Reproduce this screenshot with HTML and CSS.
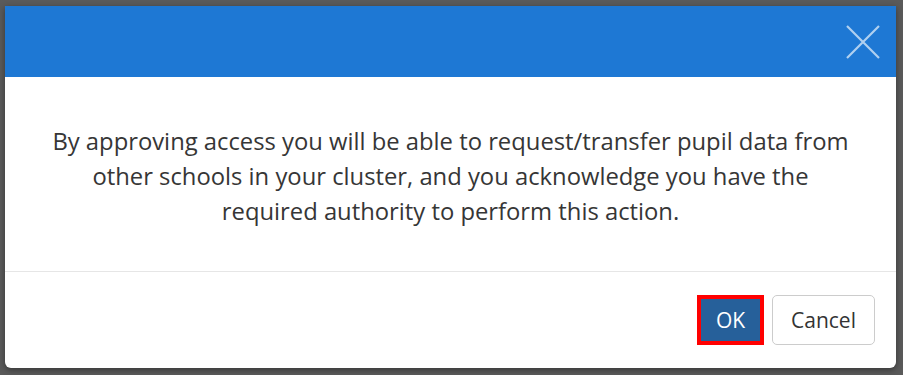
FILE: index.html
```html
<!DOCTYPE html>
<html>
<head>
<meta charset="utf-8">
<link rel="stylesheet" href="styles.css">
</head>
<body>
<div class="backdrop">
  <div class="modal">
    <div class="modal-header">
      <button class="close" aria-label="Close">
        <svg width="34" height="34" viewBox="0 0 34 34"><path d="M1 1 L33 33 M33 1 L1 33" stroke="#ffffff" stroke-opacity="0.65" stroke-width="2.2" fill="none"/></svg>
      </button>
    </div>
    <div class="modal-body">
      <p>By approving access you will be able to request/transfer pupil data from other schools in your cluster, and you acknowledge you have the required authority to perform this action.</p>
    </div>
    <div class="modal-footer">
      <button class="btn btn-ok">OK</button>
      <button class="btn btn-cancel">Cancel</button>
    </div>
  </div>
</div>
</body>
</html>
```

FILE: styles.css
```css
html, body {
  margin: 0;
  padding: 0;
}
body {
  background: #5a5a5a;
  font-family: "Open Sans", "Liberation Sans", sans-serif;
  width: 903px;
  height: 375px;
  overflow: hidden;
}
.backdrop {
  padding: 6px 7px 0 5px;
}
.modal {
  width: 891px;
  height: 362px;
  background: #ffffff;
  border-radius: 0 0 6px 6px;
  overflow: hidden;
  display: flex;
  flex-direction: column;
  box-shadow: 0 2px 6px rgba(0,0,0,0.4);
}
.modal-header {
  height: 71px;
  background: #1e78d4;
  display: flex;
  align-items: center;
  justify-content: flex-end;
  padding-right: 16px;
  flex-shrink: 0;
}
.close {
  background: none;
  border: 0;
  padding: 0;
  width: 34px;
  height: 34px;
  display: block;
}
.close svg { display: block; }
.modal-body {
  height: 195px;
  box-sizing: border-box;
  padding: 47px 40px 0;
  border-bottom: 1px solid #e6e6e6;
  flex-shrink: 0;
}
.modal-body p {
  margin: 0;
  text-align: center;
  font-size: 23.8px;
  line-height: 35px;
  color: #363636;
}
.modal-footer {
  flex: 1;
  display: flex;
  justify-content: flex-end;
  align-items: flex-start;
  gap: 8px;
  padding: 23px 21px 0 0;
}
.btn {
  font-family: "Open Sans", "Liberation Sans", sans-serif;
  font-size: 21px;
  height: 50px;
  box-sizing: border-box;
  border-radius: 5px;
  padding: 0;
  cursor: pointer;
}
.btn-ok {
  width: 67px;
  background: #26609a;
  color: #ffffff;
  border: 4px solid #ff0000;
  border-radius: 0;
}
.btn-cancel {
  width: 103px;
  background: #ffffff;
  color: #333333;
  border: 1px solid #cccccc;
}
```
